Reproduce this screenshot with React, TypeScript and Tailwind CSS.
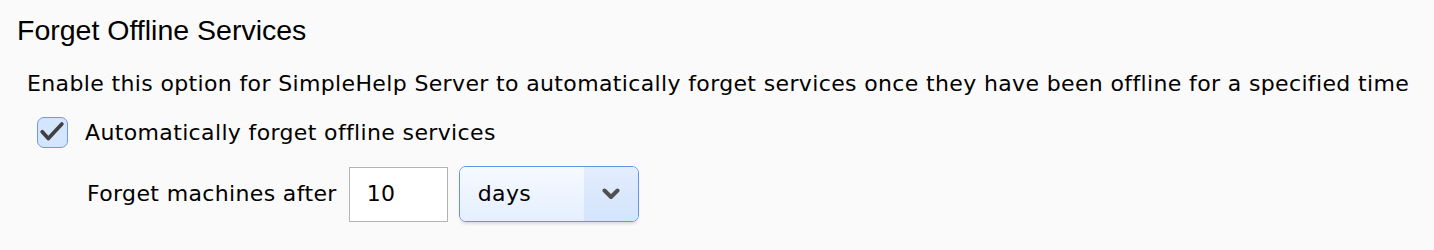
export default function App() {
  return (
    <div className="min-h-[250px] bg-[#fafafa] text-black pl-[17px] pt-[14px]">
      {/* Section title */}
      <h2 className="text-[28.5px] leading-[32px] font-normal" style={{ fontFamily: '"Liberation Sans", Arial, sans-serif' }}>
        Forget Offline Services
      </h2>

      <div className="text-[22px] leading-[26px] tracking-[0.36px]" style={{ fontFamily: '"DejaVu Sans", "Lucida Grande", sans-serif' }}>
        <p className="mt-[25px] pl-[10px]">
          Enable this option for SimpleHelp Server to automatically forget services once they have been offline for a
          specified time
        </p>

        {/* Checkbox row */}
        <label className="mt-[20px] ml-[20px] flex items-center gap-[17px]">
          <span className="w-[31px] h-[31px] rounded-[7px] border border-[#6b9be5] bg-[#d4e5fe] flex items-center justify-center shrink-0">
            <svg width="31" height="31" viewBox="0 0 31 31" fill="none">
              <path
                d="M4.5 14.8 L11 22 L25.5 6.5"
                stroke="#404040"
                strokeWidth="4"
                strokeLinecap="round"
                strokeLinejoin="round"
              />
            </svg>
          </span>
          <span>Automatically forget offline services</span>
        </label>

        {/* Duration row */}
        <div className="mt-[18px] ml-[70px] flex items-center">
          <span>Forget machines after</span>
          <div className="ml-[12px] w-[99px] h-[55px] bg-white border border-[#b4b4b4] flex items-center pl-[17px]">
            10
          </div>
          <div className="ml-[11px] w-[180px] h-[56px] rounded-[7px] border border-[#6495e4] flex overflow-hidden shadow-[0_3px_3px_-1px_rgba(0,0,0,0.12)]">
            <div className="flex-1 flex items-center pl-[18px] bg-gradient-to-b from-[#f6f9ff] to-[#e5effe]">days</div>
            <div className="w-[54px] flex items-center justify-center bg-gradient-to-b from-[#e3edfd] to-[#d3e4fc]">
              <svg width="18" height="12" viewBox="0 0 18 12" fill="none">
                <path d="M2.5 2.5 L9 9 L15.5 2.5" stroke="#505050" strokeWidth="4" strokeLinecap="round" strokeLinejoin="round" />
              </svg>
            </div>
          </div>
        </div>
      </div>
    </div>
  );
}
